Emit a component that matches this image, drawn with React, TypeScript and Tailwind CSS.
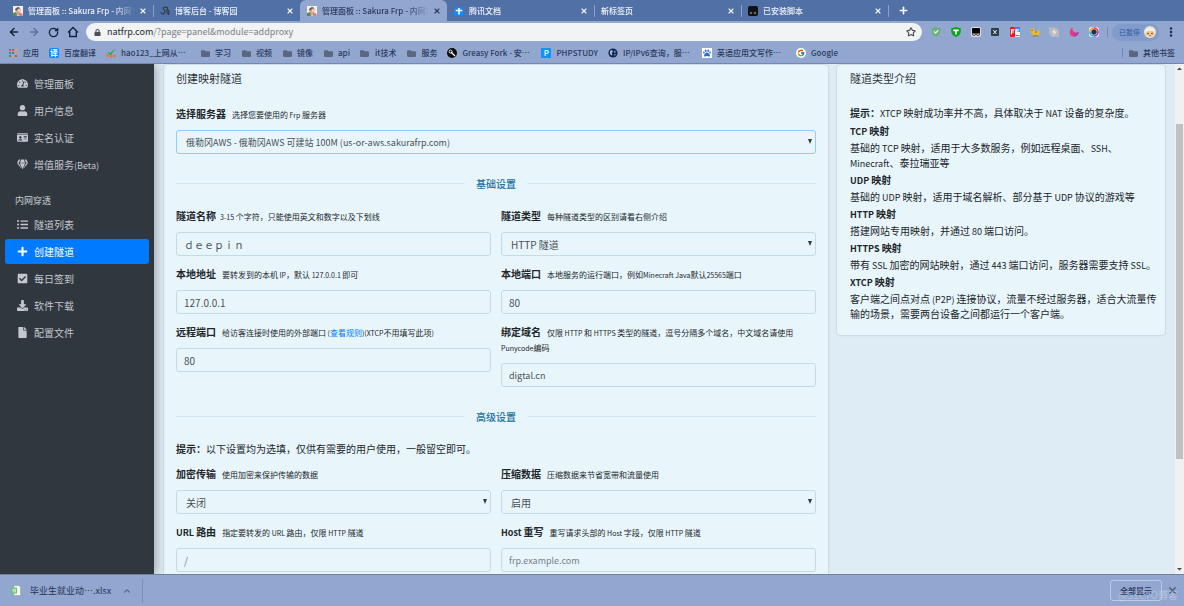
import type { ReactNode } from 'react'
import {
  FaCheckSquare,
  FaDownload,
  FaFile,
  FaFolder,
  FaGem,
  FaIdCard,
  FaListUl,
  FaLock,
  FaPaw,
  FaPlus,
  FaTachometerAlt,
  FaUser,
} from 'react-icons/fa'
import { FcGoogle } from 'react-icons/fc'
import { ArrowLeft, ArrowRight, ChevronUp, House, MoreVertical, Plus, RotateCw, Star, X } from 'lucide-react'

const SakuraIcon = () => (
  <svg viewBox="0 0 10 10" className="size-[10px] shrink-0">
    <rect width="10" height="10" fill="#f3f1ec" />
    <path d="M2 4 L4 1 L7 1.5 L8 4 L7 6 L8 9 L2 10 L3 6 Z" fill="#c9ab94" />
    <path d="M2 3 L5 1 L7 2 L5 3 L3 5 Z" fill="#6f5a4c" />
    <path d="M0 7 L3 6 L4 10 L0 10 Z" fill="#5f8a55" />
    <circle cx="6" cy="4.5" r="1.2" fill="#f2d6c4" />
    <path d="M6 7 L9 7 L10 10 L6 10 Z" fill="#d9808a" />
  </svg>
)

const BlogIcon = () => (
  <svg viewBox="0 0 10 10" className="size-[10px] shrink-0" fill="none" stroke="#33373f" strokeWidth="1.1" strokeLinecap="round">
    <path d="M1 6.5 C2.5 9 5 8 5 5.5 C5 3 2.5 3.5 3 1.5 M4.5 1.5 C7 0.5 8.5 2 7 4 C5.5 6 8 6 8.5 8.5 M7 4 C9 3.5 9.5 6 8.5 8.5" />
  </svg>
)

const DocsIcon = () => (
  <svg viewBox="0 0 10 10" className="size-[10px] shrink-0">
    <path d="M0.5 1 H7 L9.5 3 V9.5 H0.5 Z" fill="#118bf5" />
    <path d="M4.2 2 H5.8 V3.8 H8.3 V5.2 H5.8 V8.5 H4.2 V5.2 H1.7 V3.8 H4.2 Z" fill="#fff" />
  </svg>
)

const MonkeyIcon = () => (
  <svg viewBox="0 0 10 10" className="size-[10px] shrink-0">
    <rect width="10" height="10" rx="2" fill="#101010" />
    <circle cx="3" cy="7" r="1.3" fill="#60666b" />
    <circle cx="7" cy="7" r="1.3" fill="#60666b" />
  </svg>
)

const tabs = [
  { title: '管理面板 :: Sakura Frp - 内网穿透', icon: <SakuraIcon /> },
  { title: '博客后台 - 博客园', icon: <BlogIcon />, line: true },
  { title: '管理面板 :: Sakura Frp - 内网穿透', icon: <SakuraIcon />, active: true },
  { title: '腾讯文档', icon: <DocsIcon /> },
  { title: '新标签页', line: true },
  { title: '已安装脚本', icon: <MonkeyIcon />, line: true },
]

const TabStrip = () => (
  <div className="flex h-[21px] items-center bg-[#5170a5] pl-[6px]">
    {tabs.map((tab, i) => (
      <div
        key={i}
        className={`flex h-full max-w-[147px] flex-1 items-center ${tab.active ? 'rounded-t-md bg-[#92a7d0] text-[#2c3a5c]' : 'text-[#eef2fa]'}`}
      >
        <span className={`h-[12px] w-px ${tab.line ? 'bg-[#8ba1c9]' : ''}`} />
        <div className="flex min-w-0 flex-1 items-center gap-[5px] pl-[6px]">
          {tab.icon}
          <span className="flex-1 overflow-hidden whitespace-nowrap text-[8px] font-medium leading-[12px] [mask-image:linear-gradient(to_right,black_80%,transparent)]">
            {tab.title}
          </span>
        </div>
        <button aria-label="关闭标签页" className="mr-[6px] ml-[4px]">
          <X className="size-[8px]" strokeWidth={3.5} />
        </button>
      </div>
    ))}
    <span className="h-[12px] w-px bg-[#8ba1c9]" />
    <button aria-label="新建标签页" className="ml-[9px] text-white">
      <Plus className="size-[11px]" strokeWidth={3.5} />
    </button>
  </div>
)

const extensions: { name: string; art: ReactNode }[] = [
  {
    name: 'AdGuard',
    art: (
      <>
        <path d="M5 0.3 L9.3 1.3 V4.5 C9.3 7.3 7 9 5 9.9 C3 9 0.7 7.3 0.7 4.5 V1.3 Z" fill="#67b279" />
        <path d="M3 4.5 L4.6 6.2 L7.3 3" fill="none" stroke="#fff" strokeWidth="1.1" />
      </>
    ),
  },
  {
    name: 'Todo',
    art: (
      <>
        <path d="M5 0 L9.7 1.2 V4.5 C9.7 7.5 7 9.4 5 10 C3 9.4 0.3 7.5 0.3 4.5 V1.2 Z" fill="#09a51b" />
        <path d="M2.3 2.5 H7.7 V4.2 H5.8 V7.5 H4.2 V4.2 H2.3 Z" fill="#fff" />
      </>
    ),
  },
  {
    name: 'Tampermonkey',
    art: (
      <>
        <rect width="10" height="10" rx="2" fill="#dcdcdc" />
        <path d="M1 2 Q1 1 2 1 H8 Q9 1 9 2 V6 H1 Z" fill="#050505" />
        <circle cx="3" cy="7" r="1.8" fill="#050505" />
        <circle cx="7" cy="7" r="1.8" fill="#050505" />
        <circle cx="3" cy="7.2" r="0.9" fill="#dcdcdc" />
        <circle cx="7" cy="7.2" r="0.9" fill="#dcdcdc" />
      </>
    ),
  },
  {
    name: 'XPath',
    art: (
      <>
        <rect x="1" y="1" width="8" height="8" rx="1" fill="#2d4048" />
        <path d="M3.3 3 L6.3 7 M6.8 3 L3.3 7" stroke="#e2eaf0" strokeWidth="1" />
      </>
    ),
  },
  {
    name: 'FeHelper',
    art: (
      <>
        <rect width="10" height="10" rx="1" fill="#eef" />
        <rect width="5" height="10" rx="1" fill="#f01318" />
        <rect x="5" width="5" height="5" fill="#3c86ee" />
        <path d="M1.5 7.5 V2.8 H4.5 M1.5 5 H4" fill="none" stroke="#fff" strokeWidth="1.2" />
        <path d="M9 2.8 H6 V7.5 H9 M6 5 H8.6" fill="none" stroke="#fff" strokeWidth="1.2" />
        <path d="M5.5 8.5 H9.5" stroke="#e52a2f" strokeWidth="0.8" />
      </>
    ),
  },
  {
    name: 'Cat',
    art: (
      <>
        <path d="M0.5 1 L2 2 L3.5 1 L4.3 4 H8 L9.5 2.5 V6 L8.5 9 H7.3 V7.5 H4 V9 H2.7 V7 L0.5 5 Z" fill="#f0bd26" />
        <path d="M1.2 3.3 H3 M5 5 H7" stroke="#75521a" strokeWidth="0.8" />
        <path d="M2.5 9 H8.5" stroke="#9a6a1a" strokeWidth="0.9" />
      </>
    ),
  },
  {
    name: 'Flash',
    art: (
      <>
        <path d="M0 0.5 H7 L10 4 V10 H3 L0 7 Z" fill="#b8b9bd" />
        <path d="M6 1.5 L2.5 5.5 H5 L4 9 L8 4.5 H5.5 Z" fill="#e9e9ec" />
      </>
    ),
  },
  {
    name: 'Moon',
    art: (
      <>
        <path d="M3.5 0.5 C-0.5 3 -0.3 9.5 5 9.6 C8 9.6 9.5 7.5 9.8 5 C6.5 7 3 5 3.5 0.5 Z" fill="#ee3a72" />
        <path d="M5 9.6 C8 9.6 9.5 7.5 9.8 5 C7.5 6.8 5 6 4 4 Z" fill="#b43bb0" />
      </>
    ),
  },
  {
    name: 'Camera',
    art: (
      <>
        <rect width="10" height="10" rx="2.5" fill="#f2e9f4" />
        <path d="M1 5 A4 4 0 0 1 5 1" stroke="#f2a11f" strokeWidth="1.6" fill="none" />
        <path d="M5 1 A4 4 0 0 1 9 5" stroke="#e83e4f" strokeWidth="1.6" fill="none" />
        <path d="M9 5 A4 4 0 0 1 5 9" stroke="#8f3bd8" strokeWidth="1.6" fill="none" />
        <path d="M5 9 A4 4 0 0 1 1 5" stroke="#1fb6c4" strokeWidth="1.6" fill="none" />
        <circle cx="5" cy="5" r="2.7" fill="#2a3340" />
      </>
    ),
  },
]

const Toolbar = () => (
  <div className="flex h-[22px] items-center pr-[7px] pl-[8px] text-[#14233f]">
    <div className="flex items-center gap-[8px]">
      <button aria-label="后退"><ArrowLeft className="size-[12px]" strokeWidth={3} /></button>
      <button aria-label="前进" className="text-[#5c719f]"><ArrowRight className="size-[12px]" strokeWidth={3} /></button>
      <button aria-label="重新加载"><RotateCw className="size-[11px]" strokeWidth={3} /></button>
      <button aria-label="主页">
        <svg viewBox="0 0 12 12" className="size-[12px]" fill="none" stroke="currentColor" strokeWidth="1.4">
          <path d="M1 6.500 L6 1.500 L11 6.500 M2.700 5.500 V10.500 H9.300 V5.500" />
        </svg>
      </button>
    </div>
    <div className="ml-[7px] flex h-[18px] flex-1 items-center rounded-full bg-[#f1f3f4] pr-[6px] pl-[8px]">
      <FaLock className="size-[7px] text-[#4b4f54]" />
      <div className="ml-[6px] h-[14px] flex-1 text-[9px] leading-[14px]">
        <span className="text-[#26282b]">natfrp.com</span>
        <span className="text-[#7c8085]">/?page=panel&amp;module=addproxy</span>
      </div>
      <button aria-label="收藏"><Star className="size-[10px] text-[#454a50]" strokeWidth={2.5} /></button>
    </div>
    <div className="ml-[9px] flex items-center gap-[10px]">
      {extensions.map((ext) => (
        <button key={ext.name} aria-label={ext.name} className="w-[10px] [&:nth-child(3n)]:-mr-px">
          <svg viewBox="0 0 10 10" className="size-[10px]">{ext.art}</svg>
        </button>
      ))}
    </div>
    <span className="ml-[9px] h-[10px] w-px bg-[#7187b6]" />
    <button className="ml-[4px] flex h-[17px] items-center gap-[4px] rounded-full bg-[#819bcb] pr-[3px] pl-[7px] text-[7px] leading-[12px] text-[#2b57a5]">
      已暂停
      <svg viewBox="0 0 12 12" className="size-[12px]">
        <circle cx="6" cy="6" r="6" fill="#ebe3d2" />
        <path d="M1.5 7 C1.5 4 3.5 3 6 3.5 C8.5 3 10.5 4 10.5 7 C10.5 9.5 8.5 11 6 11 C3.5 11 1.5 9.5 1.5 7 Z" fill="#f3c993" />
        <path d="M1 7 C1 2.5 4 2 6 2 C8 2 11 2.5 11 7 C9.5 5 8 4.5 6 5 C4 4.5 2.5 5 1 7 Z" fill="#f7f3ea" />
        <circle cx="4" cy="7.5" r="0.8" fill="#5a3a22" />
        <circle cx="8" cy="7.5" r="0.8" fill="#5a3a22" />
        <path d="M5 9.5 H7" stroke="#b4593a" strokeWidth="0.7" />
      </svg>
    </button>
    <button aria-label="菜单" className="ml-[6px]"><MoreVertical className="size-[12px]" strokeWidth={3} /></button>
  </div>
)

const folderIcon = <FaFolder className="size-[9px] text-[#5b6780]" />

const bookmarks: { text: string; icon: ReactNode; fixed?: boolean }[] = [
  {
    text: '应用',
    icon: (
      <svg viewBox="0 0 10 10" className="size-[10px]">
        <rect x="1" y="1" width="2" height="2" fill="#e24a3b" />
        <rect x="4" y="1" width="2" height="2" fill="#e24a3b" />
        <rect x="7" y="1" width="2" height="2" fill="#f0a62a" />
        <rect x="1" y="4" width="2" height="2" fill="#2e9f57" />
        <rect x="4" y="4" width="2" height="2" fill="#3e74e0" />
        <rect x="7" y="4" width="2" height="2" fill="#f0a62a" />
        <rect x="1" y="7" width="2" height="2" fill="#2e9f57" />
        <rect x="4" y="7" width="2" height="2" fill="#f0a62a" />
        <rect x="7" y="7" width="2" height="2" fill="#e24a3b" />
      </svg>
    ),
  },
  {
    text: '百度翻译',
    icon: <span className="flex size-[10px] items-center justify-center rounded-xs bg-[#0a86f8] text-[8px] leading-[10px] font-bold text-white">译</span>,
  },
  {
    text: 'hao123_上网从…',
    fixed: true,
    icon: (
      <svg viewBox="0 0 10 10" className="size-[10px]">
        <path d="M1.5 3.5 L4 5 L9.8 0.3 L5 7 L3.5 7 Z" fill="#35ab3d" />
        <path d="M1 5 V9.5 M1 7.5 Q2.8 6.5 3 9.5 M5.8 7.5 Q4 7 4 8.5 Q4.5 10 5.8 9 V7.5 V9.5" stroke="#e4703a" fill="none" />
        <circle cx="8.3" cy="8.2" r="1.1" stroke="#e4703a" fill="none" />
      </svg>
    ),
  },
  { text: '学习', icon: folderIcon },
  { text: '视频', icon: folderIcon },
  { text: '镜像', icon: folderIcon },
  { text: 'api', icon: folderIcon },
  { text: 'it技术', icon: folderIcon },
  { text: '服务', icon: folderIcon },
  {
    text: 'Greasy Fork - 安…',
    fixed: true,
    icon: (
      <svg viewBox="0 0 10 10" className="size-[10px]">
        <circle cx="5" cy="5" r="5" fill="#0c0c0c" />
        <path d="M4 4 L8 8" stroke="#fff" strokeWidth="1.3" />
        <circle cx="3.6" cy="3.6" r="1.5" fill="none" stroke="#fff" strokeWidth="0.9" />
      </svg>
    ),
  },
  {
    text: 'PHPSTUDY',
    icon: <span className="flex size-[10px] items-center justify-center bg-[#1293f7] text-[8px] leading-[10px] text-white">P</span>,
  },
  {
    text: 'IP/IPv6查询，服…',
    fixed: true,
    icon: (
      <svg viewBox="0 0 10 10" className="size-[10px]">
        <circle cx="5" cy="5" r="4.6" fill="#15284f" />
        <path d="M2 3 L4 2 L5 4 L3.5 5 L4.5 6.5 L3.5 7.5 L2 6 Z M6 2.5 L8 4 L6.5 5 Z M6.5 6 L8 6.5 L6.5 8 Z" fill="#a5b7db" />
      </svg>
    ),
  },
  {
    text: '英语应用文写作…',
    fixed: true,
    icon: <span className="flex size-[10px] items-center justify-center bg-white text-[#2a6be2]"><FaPaw className="size-[8px]" /></span>,
  },
  {
    text: 'Google',
    icon: <span className="flex size-[10px] items-center justify-center rounded-full bg-white"><FcGoogle className="size-[8px]" /></span>,
  },
]

const BookmarkBar = () => (
  <div className="flex h-[21px] items-center border-b border-[#7387b6] pr-[9px] pl-[8px] text-[8px] leading-[12px] font-medium text-[#2b3a5c]">
    <div className="flex min-w-0 flex-1 items-center gap-[10px]">
      {bookmarks.map((b) => (
        <a key={b.text} href="#" className="flex shrink-0 items-center gap-[5px] whitespace-nowrap">
          <span className="flex w-[10px] justify-center">{b.icon}</span>
          <span className={b.fixed ? 'w-[69px]' : ''}>{b.text}</span>
        </a>
      ))}
    </div>
    <span className="mr-[6px] h-[10px] w-px bg-[#7187b6]" />
    <a href="#" className="flex items-center gap-[5px]">
      {folderIcon}
      其他书签
    </a>
  </div>
)

// Latin letters and digits are set one pixel smaller than the Chinese around them
const Mixed = ({ text, small }: { text: string; small?: boolean }) => (
  <>
    {text.split(/([\x20-\x7e]+)/).map((part, i) =>
      i % 2 ? (
        <span key={i} className={small ? 'text-[7px] leading-none' : 'text-[9px] leading-none'}>{part}</span>
      ) : (
        part
      ),
    )}
  </>
)

const NavItem = ({ icon, text, active }: { icon: ReactNode; text: string; active?: boolean }) => (
  <li>
    <a
      href="#"
      className={`flex h-[25px] items-center rounded-[3px] pl-[11px] [&_svg]:h-[11px] [&_svg]:w-auto ${active ? 'bg-[#007bff] text-white' : 'text-[#c2c7d0]'}`}
    >
      <span className="mr-[5px] flex w-[13px] justify-center">{icon}</span>
      <span><Mixed text={text} /></span>
    </a>
  </li>
)

const Sidebar = () => (
  <nav className="z-10 w-[154px] shrink-0 bg-[#31373e] px-[5px] pt-[7px] text-[10px] leading-[15px] shadow-[2px_0_10px_rgba(0,0,0,0.3)]">
    <ul className="flex flex-col gap-[2px]">
      <NavItem icon={<FaTachometerAlt />} text="管理面板" />
      <NavItem icon={<FaUser />} text="用户信息" />
      <NavItem icon={<FaIdCard />} text="实名认证" />
      <NavItem icon={<FaGem />} text="增值服务(Beta)" />
    </ul>
    <h2 className="mt-[16px] mb-[4px] pl-[10px] text-[9px] text-[#c9ced5]">内网穿透</h2>
    <ul className="flex flex-col gap-[2px]">
      <NavItem icon={<FaListUl />} text="隧道列表" />
      <NavItem icon={<FaPlus />} text="创建隧道" active />
      <NavItem icon={<FaCheckSquare />} text="每日签到" />
      <NavItem icon={<FaDownload />} text="软件下载" />
      <NavItem icon={<FaFile />} text="配置文件" />
    </ul>
  </nav>
)

type FieldProps = {
  id: string
  label: string
  hint: ReactNode
  tight?: boolean
  small?: boolean
  value?: string
  placeholder?: string
  option?: string
  focused?: boolean
}

const Field = ({ id, label, hint, tight, small, value, placeholder, option, focused }: FieldProps) => (
  <div>
    <label htmlFor={id} className="mb-[9px] block leading-[15px] text-[#212529]">
      <b><Mixed text={label} /></b>
      <span className={`text-[8px] leading-none ${tight ? 'ml-[4px]' : 'ml-[6px]'}`}>
        {typeof hint === 'string' ? <Mixed text={hint} small /> : hint}
      </span>
    </label>
    {option ? (
      <div className="relative">
        <select
          id={id}
          className={`block h-[24px] w-full appearance-none rounded-[3px] border bg-transparent pt-px pl-[9px] text-[#495057] ${small ? 'text-[9px]' : 'text-[10px]'} ${focused ? 'border-[#94cbfa]' : 'border-[#c6dae4]'}`}
        >
          <option>{option}</option>
        </select>
        <svg viewBox="0 0 4 5" className="pointer-events-none absolute top-[9px] right-[4px] h-[5px] w-[4px]">
          <path d="M0 0 H4 L2 5 Z" fill="#343a40" />
        </svg>
      </div>
    ) : (
      <input
        id={id}
        defaultValue={value}
        placeholder={placeholder}
        className={`block h-[24px] w-full rounded-[3px] border border-[#c6dae4] bg-transparent px-[7px] text-[#495057] placeholder:text-[#75818a] ${small ? 'text-[9px]' : 'text-[10px]'}`}
      />
    )}
  </div>
)

const Divider = ({ text }: { text: string }) => (
  <div className="mt-[22px] mb-[17px] flex items-center gap-[11px] leading-[15px] font-medium text-[#22719f]">
    <span className="h-px flex-1 bg-[#d5e7f1]" />
    <h3>{text}</h3>
    <span className="h-px flex-1 bg-[#d5e7f1]" />
  </div>
)

const TunnelForm = () => (
  <form className="min-w-0 flex-1 rounded-t-[3px] bg-[#e8f6fc] px-[12px] pt-[5px] shadow-[0_0_2px_rgba(0,0,0,0.25)]">
    <h1 className="mb-[20px] text-[11px] leading-[16px] text-[#2d3338]">创建映射隧道</h1>
    <Field
      id="server"
      label="选择服务器"
      hint="选择您要使用的 Frp 服务器"
      option="俄勒冈AWS - 俄勒冈AWS 可建站 100M (us-or-aws.sakurafrp.com)"
      small
      focused
    />
    <Divider text="基础设置" />
    <div className="grid grid-cols-2 gap-[10px]">
      <Field id="name" label="隧道名称" hint="3-15 个字符，只能使用英文和数字以及下划线" tight value="ｄｅｅｐｉｎ" />
      <Field id="type" label="隧道类型" hint="每种隧道类型的区别请看右侧介绍" option="HTTP 隧道" />
      <Field id="local-ip" label="本地地址" hint="要转发到的本机 IP，默认 127.0.0.1 即可" value="127.0.0.1" />
      <Field id="local-port" label="本地端口" hint="本地服务的运行端口，例如Minecraft Java默认25565端口" value="80" />
      <Field
        id="remote-port"
        label="远程端口"
        hint={
          <>
            <Mixed text="给访客连接时使用的外部端口 (" small />
            <a href="#" className="text-[#007bff]">查看规则</a>
            <Mixed text=")(XTCP不用填写此项)" small />
          </>
        }
        value="80"
      />
      <Field
        id="domain"
        label="绑定域名"
        hint="仅限 HTTP 和 HTTPS 类型的隧道，逗号分隔多个域名，中文域名请使用 Punycode编码"
        value="digtal.cn"
        small
      />
    </div>
    <Divider text="高级设置" />
    <p className="mb-[10px] leading-[15px]">
      <b>提示：</b>以下设置均为选填，仅供有需要的用户使用，一般留空即可。
    </p>
    <div className="grid grid-cols-2 gap-[10px]">
      <Field id="encrypt" label="加密传输" hint="使用加密来保护传输的数据" option="关闭" />
      <Field id="compress" label="压缩数据" hint="压缩数据来节省宽带和流量使用" option="启用" />
      <Field id="url" label="URL 路由" hint="指定要转发的 URL 路由，仅限 HTTP 隧道" placeholder="/" />
      <Field id="host" label="Host 重写" hint="重写请求头部的 Host 字段，仅限 HTTP 隧道" placeholder="frp.example.com" small />
    </div>
  </form>
)

const types = [
  ['TCP 映射', '基础的 TCP 映射，适用于大多数服务，例如远程桌面、SSH、Minecraft、泰拉瑞亚等'],
  ['UDP 映射', '基础的 UDP 映射，适用于域名解析、部分基于 UDP 协议的游戏等'],
  ['HTTP 映射', '搭建网站专用映射，并通过 80 端口访问。'],
  ['HTTPS 映射', '带有 SSL 加密的网站映射，通过 443 端口访问，服务器需要支持 SSL。'],
  ['XTCP 映射', '客户端之间点对点 (P2P) 连接协议，流量不经过服务器，适合大流量传输的场景，需要两台设备之间都运行一个客户端。'],
]

const TypeIntro = () => (
  <aside className="w-[328px] shrink-0 self-start rounded-[3px] bg-[#e8f6fc] pt-[5px] pr-[6px] pb-[14px] pl-[13px] shadow-[0_0_2px_rgba(0,0,0,0.25)]">
    <h2 className="mb-[19px] text-[11px] leading-[16px] text-[#2d3338]">隧道类型介绍</h2>
    <p className="leading-[15px]">
      <b>提示：</b><Mixed text="XTCP 映射成功率并不高，具体取决于 NAT 设备的复杂度。" />
    </p>
    <dl className="mt-[3px] flex flex-col gap-[2px] leading-[15px]">
      {types.map(([name, text]) => (
        <div key={name} className="flex flex-col gap-[2px]">
          <dt className="font-bold"><Mixed text={name} /></dt>
          <dd><Mixed text={text} /></dd>
        </div>
      ))}
    </dl>
  </aside>
)

const ScrollBar = () => (
  <div className="flex w-[9px] shrink-0 flex-col items-center bg-[#f1f1f1]">
    <svg viewBox="0 0 9 9" className="size-[9px] shrink-0"><path d="M2 6 L4.500 3.500 L7 6 Z" fill="#4a4a4a" /></svg>
    <span className="flex-[51]" />
    <span className="w-[7px] flex-[335] bg-[#c1c1c1]" />
    <span className="flex-[106]" />
    <svg viewBox="0 0 9 9" className="size-[9px] shrink-0"><path d="M2 3 L4.500 5.500 L7 3 Z" fill="#4a4a4a" /></svg>
  </div>
)

const DownloadBar = () => (
  <footer className="relative flex h-[32px] shrink-0 items-center border-t border-[#71839f] bg-[#92a7d0] pr-[6px] pl-[11px] text-[#263453]">
    <svg viewBox="0 0 10 11" className="h-[11px] w-[10px]">
      <path d="M3 0.500 H8 L9.500 2.500 V10.500 H3 Z" fill="#f6faf6" stroke="#8c9a93" strokeWidth="0.500" />
      <rect x="0.500" y="2.500" width="5.500" height="6" fill="#66c26b" />
      <path d="M2 4 H4.500 V7 H2 Z M2 5.500 H4.500" fill="none" stroke="#e5f5e5" strokeWidth="0.700" />
    </svg>
    <span className="ml-[9px] text-[9px] leading-[14px]">毕业生就业动….xlsx</span>
    <button aria-label="更多" className="ml-[11px]"><ChevronUp className="size-[10px] text-[#46536e]" strokeWidth={2.5} /></button>
    <span className="ml-[10px] h-[24px] w-px bg-[#7b90bd]" />
    <button className="ml-auto h-[21px] rounded-[3px] border border-[#bccae3] px-[9px] text-[8px] leading-[12px] font-medium">全部显示</button>
    <button aria-label="关闭" className="ml-[5px]"><X className="size-[11px] text-[#46536e]" strokeWidth={2.5} /></button>
    <span className="pointer-events-none absolute right-[6px] bottom-[4px] text-[10px] leading-[14px] text-white/30">@51CTO博客</span>
  </footer>
)

const App = () => (
  <div
    lang="zh-CN"
    className="flex h-screen flex-col overflow-hidden bg-[#92a7d0] font-['Noto_Sans_CJK_SC','Noto_Sans',sans-serif] text-[10px] text-[#212529]"
  >
    <header className="shrink-0">
      <TabStrip />
      <Toolbar />
      <BookmarkBar />
    </header>
    <div className="flex min-h-0 flex-1 overflow-hidden bg-[#deecf5]">
      <Sidebar />
      <main className="flex min-w-0 flex-1 gap-[9px] overflow-hidden pt-px pr-[10px] pl-[10px]">
        <TunnelForm />
        <TypeIntro />
      </main>
      <ScrollBar />
    </div>
    <DownloadBar />
  </div>
)

export default App
